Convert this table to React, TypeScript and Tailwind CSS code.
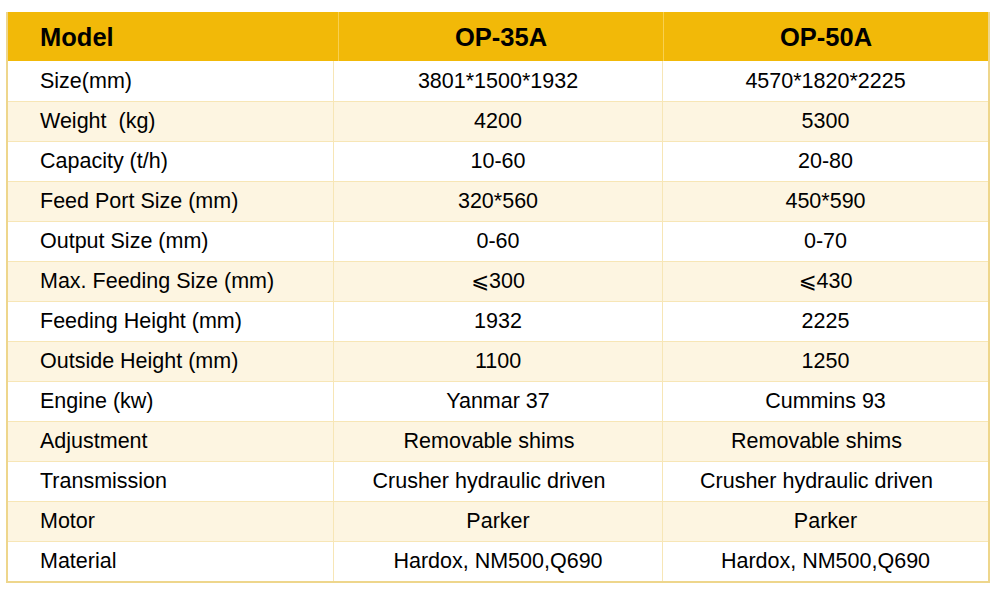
import React from "react"

// last flag: value text sits a bit left of centre in the source (trailing spaces)
const rows: [string, string, string, boolean?][] = [
  ["Size(mm)", "3801*1500*1932", "4570*1820*2225"],
  ["Weight  (kg)", "4200", "5300"],
  ["Capacity (t/h)", "10-60", "20-80"],
  ["Feed Port Size (mm)", "320*560", "450*590"],
  ["Output Size (mm)", "0-60", "0-70"],
  ["Max. Feeding Size (mm)", "⩽300", "⩽430"],
  ["Feeding Height (mm)", "1932", "2225"],
  ["Outside Height (mm)", "1100", "1250"],
  ["Engine (kw)", "Yanmar 37", "Cummins 93"],
  ["Adjustment", "Removable shims", "Removable shims", true],
  ["Transmission", "Crusher hydraulic driven", "Crusher hydraulic driven", true],
  ["Motor", "Parker", "Parker"],
  ["Material", "Hardox, NM500,Q690", "Hardox, NM500,Q690"],
]

export default function App() {
  return (
    <div
      className="w-[1000px] h-[596px] bg-white pt-[12px] pl-[6px]"
      style={{ fontFamily: '"Liberation Sans", Arial, "DejaVu Sans", sans-serif' }}
    >
      <div className="w-[984px] border-x-2 border-b-2 border-[#eed68c] text-black">
        {/* header */}
        <div className="grid grid-cols-[331px_325px_324px] h-[49px] bg-[#f2b908] text-[25.5px] font-bold">
          <div className="flex items-center pl-[32px] pt-[1px] border-r border-[#f8d050]">Model</div>
          <div className="flex items-center justify-center pt-[1px] border-r border-[#f8d050]">OP-35A</div>
          <div className="flex items-center justify-center pt-[1px]">OP-50A</div>
        </div>

        {rows.map(([label, a, b, shift], i) => (
          <div
            key={label}
            className={`grid grid-cols-[326px_329px_325px] h-[40px] text-[21.5px] ${
              i % 2 === 0 ? "bg-white" : "bg-[#fdf5e1]"
            } ${i > 0 ? "border-t border-[#f7e6b6]" : ""}`}
          >
            <div className="flex items-center pl-[32px] border-r border-[#f7e6b6] whitespace-pre">{label}</div>
            <div className={`flex items-center justify-center border-r border-[#f7e6b6] ${shift ? "pr-[18px]" : ""}`}>
              {a}
            </div>
            <div className={`flex items-center justify-center ${shift ? "pr-[18px]" : ""}`}>{b}</div>
          </div>
        ))}
      </div>
    </div>
  )
}
